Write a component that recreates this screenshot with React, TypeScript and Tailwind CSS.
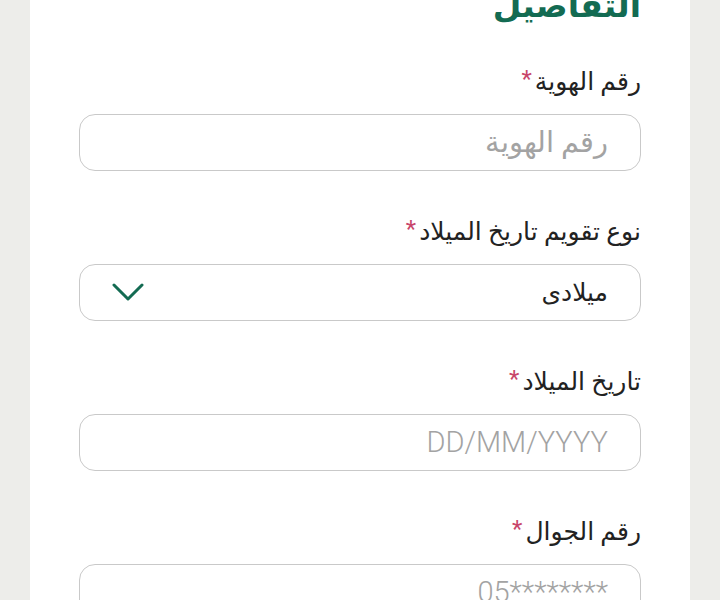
const fieldFont = { fontFamily: 'Roboto, "DejaVu Sans", sans-serif' };

const Label = ({ text }: { text: string }) => (
  <div className="flex items-center gap-[3px] text-[25px] leading-[36px] text-[#222]">
    <span>{text}</span>
    <span className="-mt-[6px] text-[24px] text-[#c8456a]">*</span>
  </div>
);

const TextField = ({ label, placeholder }: { label: string; placeholder: string }) => (
  <div className="flex flex-col gap-[14px]">
    <Label text={label} />
    <div className="flex h-[57px] items-center rounded-[16px] border border-[#c9c9c9] px-[32px] text-[29px] font-light text-[#a3a3a3]">
      <span dir="auto">{placeholder}</span>
    </div>
  </div>
);

const App = () => {
  return (
    <div dir="rtl" className="h-[600px] overflow-hidden bg-[#ededea] px-[30px]" style={fieldFont}>
      <div className="flex h-full flex-col bg-white px-[49px]">
        <h2 className="-mt-[16px] text-[33px] font-bold leading-[44px] text-[#136b52]">التفاصيل</h2>
        <div className="mt-[36px] flex flex-col gap-[43px]">
          <TextField label="رقم الهوية" placeholder="رقم الهوية" />
          <div className="flex flex-col gap-[14px]">
            <Label text="نوع تقويم تاريخ الميلاد" />
            <div className="flex h-[57px] items-center justify-between rounded-[16px] border border-[#c9c9c9] px-[32px] text-[25px] text-[#222]">
              <span>ميلادى</span>
              <svg width="32" height="19" viewBox="0 0 32 19" fill="none" className="text-[#136b52]">
                <polyline points="2,2 16,16 30,2" stroke="currentColor" strokeWidth="3" strokeLinecap="round" strokeLinejoin="round" />
              </svg>
            </div>
          </div>
          <TextField label="تاريخ الميلاد" placeholder="DD/MM/YYYY" />
          <TextField label="رقم الجوال" placeholder="05********" />
        </div>
      </div>
    </div>
  );
};

export default App;
